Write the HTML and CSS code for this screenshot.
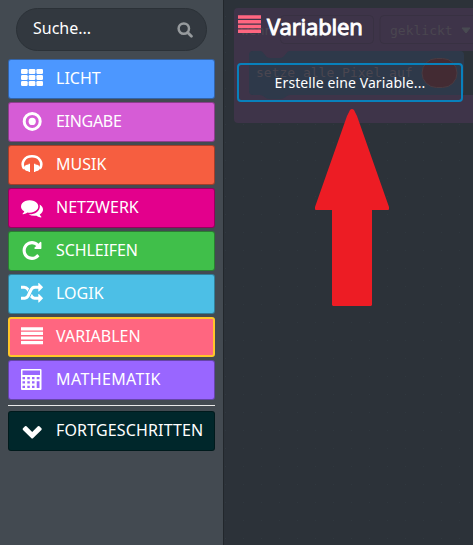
FILE: index.html
```
<!DOCTYPE html>
<html lang="de">
<head>
<meta charset="utf-8">
<title>Variablen</title>
<link rel="stylesheet" href="styles.css">
</head>
<body>
<div class="editor">
  <aside class="toolbox">
    <div class="search"><span>Suche...</span>
      <svg class="search-icon" viewBox="0 0 16 16"><circle cx="6.8" cy="6.6" r="5.2" fill="none" stroke="currentColor" stroke-width="2.5"/><path d="M10.6 10.4l3.8 3.8" stroke="currentColor" stroke-width="2.8" stroke-linecap="round"/></svg>
    </div>
    <nav class="categories">
      <div class="category light"><svg viewBox="0 0 22 22"><g><rect x="0" y="1" width="6.7" height="5" rx="1.2"/><rect x="7.7" y="1" width="6.7" height="5" rx="1.2"/><rect x="15.4" y="1" width="6.6" height="5" rx="1.2"/><rect x="0" y="7" width="6.7" height="5" rx="1.2"/><rect x="7.7" y="7" width="6.7" height="5" rx="1.2"/><rect x="15.4" y="7" width="6.6" height="5" rx="1.2"/><rect x="0" y="13" width="6.7" height="5" rx="1.2"/><rect x="7.7" y="13" width="6.7" height="5" rx="1.2"/><rect x="15.4" y="13" width="6.6" height="5" rx="1.2"/></g></svg><span>LICHT</span></div>
      <div class="category input"><svg viewBox="0 0 22 22"><circle cx="11.2" cy="10.4" r="8" fill="none" stroke="currentColor" stroke-width="3"/><circle cx="11.2" cy="10.4" r="3.6"/></svg><span>EINGABE</span></div>
      <div class="category music"><svg viewBox="0 0 22 22"><path d="M3.2 14.8C-.8 8.5 4 2.3 11 2.3s11.800 6.200 7.800 12.500" fill="none" stroke="currentColor" stroke-width="2.6"/><path d="M7.600 9.800h1.400v8.200H7.600v-.7C4.900 17.200 3 15.700 3 13.900s1.900-3.200 4.600-3.400zM14.400 9.800H13v8.200h1.400v-.7c2.700-.1 4.600-1.600 4.600-3.400s-1.900-3.200-4.600-3.400z"/></svg><span>MUSIK</span></div>
      <div class="category network"><svg viewBox="0 0 1792 1792"><path d="M1408 768q0 139-94 257t-256.500 186.500-353.500 68.500q-86 0-176-16-124 88-278 128-36 9-86 16h-3q-11 0-20.500-8t-11.500-21q-1-3-1-6.500t.5-6.500 2-6l2.500-5 3.500-5.500 4-5 4.500-5 4-4.500q5-6 23-25t26-29.500 22.500-29 25-38.500 20.500-44q-124-72-195-177t-71-224q0-139 94-257t256.500-186.500 353.500-68.500 353.500 68.500 256.500 186.500 94 257zm384 256q0 120-71 224.500t-195 176.500q10 24 20.500 44t25 38.500 22.500 29 26 29.500 23 25q1 1 4 4.500t4.500 5 4 5 3.500 5.500l2.500 5 2 6 .5 6.500-1 6.500q-3 14-13 22t-22 7q-50-7-86-16-154-40-278-128-90 16-176 16-271 0-472-132 58 4 88 4 161 0 309-45t264-129q125-92 192-212t67-254q0-77-23-152 129 71 204 178t75 230z"/></svg><span>NETZWERK</span></div>
      <div class="category loops"><svg viewBox="0 40 1792 1792"><path d="M1664 256v448q0 26-19 45t-45 19h-448q-42 0-59-40-17-39 14-69l138-138q-148-137-349-137-104 0-198.500 40.500t-163.500 109.500-109.500 163.500-40.500 198.500 40.500 198.500 109.500 163.500 163.500 109.500 198.500 40.500q119 0 225-52t179-147q7-10 23-12 15 0 25 9l137 138q9 8 9.500 20.500t-7.500 22.500q-109 132-264 204.500t-327 72.500q-156 0-298-61t-245-164-164-245-61-298 61-298 164-245 245-164 298-61q147 0 284.500 55.500t244.500 156.500l130-129q29-31 70-14 39 17 39 59z"/></svg><span>SCHLEIFEN</span></div>
      <div class="category logic"><svg viewBox="0 40 1792 1792"><path d="M666 481q-60 92-137 273-22-45-37-72.500t-40.500-63.500-51-56.500-63-35-81.500-14.500h-224q-14 0-23-9t-9-23v-192q0-14 9-23t23-9h224q250 0 410 225zm1126 799q0 14-9 23l-320 320q-9 9-23 9-13 0-22.500-9.500t-9.500-22.500v-192q-32 0-85 .5t-81 1-73-1-71-5-64-10.500-63-18.500-58-28.500-59-40-55-53.500-56-69.500q59-93 136-273 22 45 37 72.500t40.500 63.500 51 56.500 63 35 81.500 14.500h256v-192q0-14 9-23t23-9q12 0 24 10l319 319q9 9 9 23zm0-896q0 14-9 23l-320 320q-9 9-23 9-13 0-22.500-9.500t-9.500-22.500v-192h-256q-48 0-87 15t-69 45-51 61.500-45 77.500q-32 62-78 171-29 66-49.500 111t-54 105-64 100-74 83-90 68.500-106.500 42-128 16.500h-224q-14 0-23-9t-9-23v-192q0-14 9-23t23-9h224q48 0 87-15t69-45 51-61.500 45-77.500q32-62 78-171 29-66 49.500-111t54-105 64-100 74-83 90-68.500 106.500-42 128-16.500h256v-192q0-14 9-23t23-9q12 0 24 10l319 319q9 9 9 23z"/></svg><span>LOGIK</span></div>
      <div class="category variables"><svg viewBox="0 0 22 22"><path d="M0 1.200h22v3.200H0zM0 5.800h22V9H0zM0 10.400h22v3.200H0zM0 15h22v3.200H0z"/></svg><span>VARIABLEN</span></div>
      <div class="category math"><svg viewBox="0 0 22 22"><path fill-rule="evenodd" d="M1 0h18.500q1 0 1 1v19q0 1-1 1H1q-1 0-1-1V1q0-1 1-1zM1.500 1.500v4.500H19V1.500zM1.500 8v2.200h2.500V8zm4.800 0v2.200h2.500V8zm4.700 0v2.200h2.500V8zm4.700 0v2.200h2.800V8zM1.500 12.300v2.200h2.500v-2.200zm4.800 0v2.200h2.500v-2.200zm4.700 0v2.200h2.500v-2.200zM1.500 16.800v2.200h2.500v-2.200zm4.800 0v2.200h2.500v-2.200zm4.700 0v2.200h2.500v-2.200zM15.700 12.300v6.700h2.800v-6.700z"/></svg><span>MATHEMATIK</span></div>
      <hr class="separator">
      <div class="category advanced"><svg viewBox="0 0 22 22"><path d="M11.200 18.400q-.5 0-1-.5L2 9.900q-.8-.8 0-1.600l2-2q.8-.7 1.500 0l5.700 5.600L16.900 6.300q.7-.7 1.500 0l2 2q.8.800 0 1.600l-8.200 8q-.5.5-1 .5z"/></svg><span>FORTGESCHRITTEN</span></div>
    </nav>
  </aside>
  <main class="workspace">
    <svg class="blocks" viewBox="0 0 249 545">
      <defs><pattern id="dots" x="1" y="16" width="18" height="18" patternUnits="userSpaceOnUse"><rect width="1" height="1" fill="#30383f"/></pattern></defs>
      <rect width="249" height="545" fill="url(#dots)"/>
      <path d="M14 8h235v43H70v9H36v-9H30q-4 0-4 4v36q0 4 4 4h219v28H14q-4 0-4-4V12q0-4 4-4z" fill="#3e3449"/>
      <rect x="56.500" y="15.500" width="93" height="28" rx="4" fill="none" stroke="#383142"/>
      <path d="M253 15.500H160q-4 0-4 4v20q0 4 4 4h93" fill="none" stroke="#383142"/>
      <path d="M29 51h7c4 0 5 7 10 7h10c5 0 6-7 10-7h170q4 0 4 4v36q0 4-4 4H66c-4 0-5 4-10 4H46c-5 0-6-4-10-4h-7q-4 0-4-4V55q0-4 4-4z" fill="#2e394a"/>
      <rect x="198" y="58.500" width="35" height="29" rx="14.500" fill="#432b33" stroke="#493b42"/>
      <g class="ghost"><text x="17" y="35">wenn</text><text x="90" y="35">p</text><text x="166" y="35">geklickt</text><text x="32" y="77">setze alle Pixel auf</text></g>
      <path d="M238 28h8l-4 5z" fill="#494b52" stroke="#494b52" stroke-linejoin="round"/>
    </svg>
    <section class="flyout">
      <h1><svg viewBox="0 0 23 19"><path d="M0 .3h23v3.500H0zM0 5h23v3.500H0zM0 9.700h23v3.500H0zM0 14.400h23v3.500H0z"/></svg><span>Variablen</span></h1>
      <button type="button">Erstelle eine Variable...</button>
      <svg class="arrow" viewBox="0 0 74 197"><path d="M35 1q2-2 4 0l3 6 32 91v2q0 1-1 1H57v95l-1 1H18l-1-1v-95H1q-1 0-1-1v-2L32 7z"/></svg>
    </section>
  </main>
</div>
</body>
</html>
```
FILE: styles.css
```
* { box-sizing: border-box; }
body { margin: 0; font-family: "Noto Sans", sans-serif; overflow: hidden; }
.editor { display: flex; width: 473px; height: 545px; background: #2c3239; }
.toolbox { width: 223px; padding: 8px; background: #434a51; flex: none; }
.search {
  display: flex; align-items: center; justify-content: space-between;
  height: 43px; width: 191px; margin-left: 8px; padding: 0 13px 3px 16px;
  border: 1px solid #2b3137; border-radius: 22px; background: #32383f;
  color: #fff; font-size: 16px;
}
.search-icon { width: 16px; height: 16px; color: #969a9d; position: relative; top: 2px; }
.categories { display: flex; flex-direction: column; gap: 3px; padding-top: 8px; }
.category {
  display: flex; align-items: center; height: 40px; width: 207px;
  padding: 0 0 3px 12px; gap: 13px; color: #fff; font-size: 16px; line-height: 22px;
  border: 1px solid #0005; border-radius: 3px; white-space: nowrap;
}
.category svg { width: 22px; height: 22px; margin-top: 3px; flex: none; fill: currentColor; }
.light { background: #4c97ff; }
.input { background: #d65cd6; letter-spacing: -0.3px; }
.music { background: #f65e40; }
.network { background: #e3008c; }
.loops { background: #40bf4a; letter-spacing: -0.1px; }
.logic { background: #4cbfe6; }
.variables { background: #ff6680; border: 2px solid #ffc629; padding-left: 11px; }
.math { background: #9966ff; letter-spacing: 0.38px; }
.advanced { background: #00272b; letter-spacing: 0.15px; }
.separator { width: 207px; height: 1px; margin: 2px 0; border: 0; background: #e9e9e9; }
.workspace { position: relative; flex: 1; border-left: 1px solid #22272c; }
.blocks { position: absolute; top: 0; left: 0; width: 249px; height: 545px; }
.ghost { fill: #4a4650; font: 13px "DejaVu Sans Mono", monospace; }
.flyout { position: relative; display: flex; flex-direction: column; padding: 10px 10px 0 13px; }
h1 {
  display: flex; gap: 6px; height: 32px; margin: 0; padding-left: 1px; color: #fff;
  font-size: 22px; font-weight: 400; line-height: 32px; letter-spacing: -0.2px;
  -webkit-text-stroke: 0.9px #fff;
}
h1 svg { width: 23px; height: 19px; margin-top: 5px; fill: #ff6680; -webkit-text-stroke: 0; }
button {
  width: 226px; height: 39px; margin-top: 21px; padding: 0;
  border: 2px solid #0881bc; border-radius: 4px; background: transparent;
  color: #fff; font: 14px "Noto Sans", sans-serif; letter-spacing: 0.1px;
}
.arrow { width: 74px; height: 197px; margin: 7px 0 0 78px; fill: #ed1c24; }
```
